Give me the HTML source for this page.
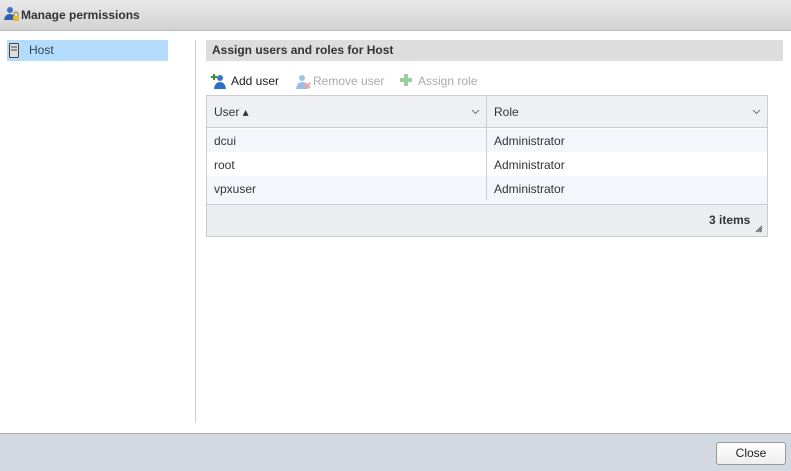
<!DOCTYPE html><html><head><style>
*{box-sizing:border-box;margin:0;padding:0}
body{width:791px;height:471px;position:relative;background:#fff;font-family:"Liberation Sans",sans-serif;font-size:12px;color:#333;overflow:hidden}
.a{position:absolute}
</style></head><body>
<div class="a" style="left:0;top:0;width:791px;height:31px;background:linear-gradient(#e9e9e9,#d2d2d2);border-bottom:1px solid #bbb"></div>
<svg class="a" style="left:3px;top:6px" width="16" height="16"><circle cx="7" cy="4" r="3" fill="#3a73c8"/><path d="M1 14 Q2 8 7 8 Q11 8 12 12 L12 14Z" fill="#2c5fb0"/><rect x="10" y="10" width="6" height="5" fill="#e8b830"/><path d="M11 10 V8 a2 2 0 0 1 4 0 V10" stroke="#a07a10" fill="none"/></svg>
<div class="a" style="left:21px;top:8px;font-weight:bold;font-size:12px;color:#333">Manage permissions</div>
<div class="a" style="left:7px;top:40px;width:161px;height:21px;background:#b3dcfd"></div>
<svg class="a" style="left:9px;top:43px" width="10" height="15"><rect x="0.5" y="0.5" width="9" height="14" rx="1" fill="#ddd" stroke="#444"/><line x1="2" y1="4" x2="8" y2="4" stroke="#444"/><line x1="2" y1="7" x2="8" y2="7" stroke="#444"/></svg>
<div class="a" style="left:29px;top:43px;color:#345">Host</div>
<div class="a" style="left:195px;top:40px;width:1px;height:383px;background:#ccc"></div>
<div class="a" style="left:206px;top:40px;width:577px;height:21px;background:#ddd"></div>
<div class="a" style="left:212px;top:43px;font-weight:bold;color:#333">Assign users and roles for Host</div>
<svg class="a" style="left:211px;top:73px" width="16" height="16"><circle cx="9" cy="5" r="3" fill="#3a73c8"/><path d="M3 16 Q4 9 9 9 Q14 9 15 16Z" fill="#2c6ec8"/><path d="M3 1v6M0 4h6" stroke="#2a9a2a" stroke-width="2"/></svg>
<div class="a" style="left:231px;top:74px;color:#222">Add user</div>
<svg class="a" style="left:295px;top:73px;opacity:.45" width="16" height="16"><circle cx="7" cy="5" r="3" fill="#3a73c8"/><path d="M1 16 Q2 9 7 9 Q12 9 13 16Z" fill="#2c6ec8"/><path d="M10 10l5 5M15 10l-5 5" stroke="#d33" stroke-width="2"/></svg>
<div class="a" style="left:313px;top:74px;color:#aaa">Remove user</div>
<svg class="a" style="left:399px;top:73px" width="14" height="14"><path d="M7 1v12M1 7h12" stroke="#9ad09a" stroke-width="4"/></svg>
<div class="a" style="left:418px;top:74px;color:#aaa">Assign role</div>
<div class="a" style="left:206px;top:95px;width:562px;height:142px;border:1px solid #ccc;background:#fff"></div>
<div class="a" style="left:207px;top:96px;width:560px;height:32px;background:#eef0f3;border-bottom:1px solid #ccc"></div>
<div class="a" style="left:214px;top:105px">User ▴</div>
<svg class="a" style="left:471px;top:109px" width="9" height="6"><path d="M1 1l3.5 3.5L8 1" stroke="#777" fill="none"/></svg>
<div class="a" style="left:494px;top:105px">Role</div>
<svg class="a" style="left:752px;top:109px" width="9" height="6"><path d="M1 1l3.5 3.5L8 1" stroke="#777" fill="none"/></svg>
<div class="a" style="left:207px;top:129px;width:560px;height:23px;background:#f3f6fa"></div>
<div class="a" style="left:207px;top:176px;width:560px;height:24px;background:#f3f6fa"></div>
<div class="a" style="left:486px;top:96px;width:1px;height:104px;background:#ccc"></div>
<div class="a" style="left:214px;top:134px">dcui</div><div class="a" style="left:494px;top:134px">Administrator</div>
<div class="a" style="left:214px;top:158px">root</div><div class="a" style="left:494px;top:158px">Administrator</div>
<div class="a" style="left:214px;top:182px">vpxuser</div><div class="a" style="left:494px;top:182px">Administrator</div>
<div class="a" style="left:207px;top:200px;width:560px;height:4px;background:#f3f6fa"></div>
<div class="a" style="left:207px;top:204px;width:560px;height:32px;background:#ebedf0;border-top:1px solid #ccc"></div>
<div class="a" style="left:709px;top:213px;font-weight:bold">3 items</div>
<svg class="a" style="left:755px;top:225px" width="8" height="8"><path d="M7 1L1 7M7 3L3 7M7 5L5 7" stroke="#555"/></svg>
<div class="a" style="left:0;top:433px;width:791px;height:38px;background:#d3d9e1;border-top:1px solid #aaa"></div>
<div class="a" style="left:716px;top:442px;width:70px;height:23px;border:1px solid #999;border-radius:3px;background:linear-gradient(#fff,#eee);text-align:center;line-height:21px;color:#222">Close</div>
</body></html>
